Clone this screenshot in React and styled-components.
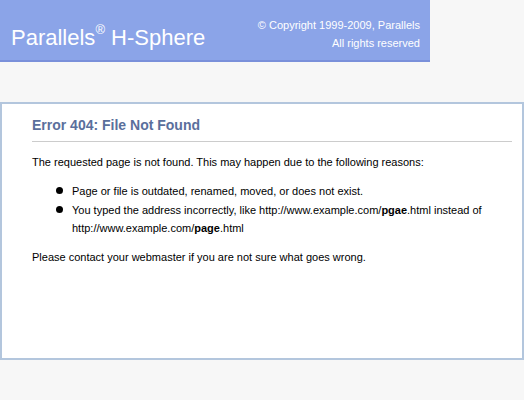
import React from 'react'
import styled, { createGlobalStyle } from 'styled-components';

const GlobalStyle = createGlobalStyle`
  html, body {
    margin: 0;
    padding: 0;
    background: #f7f7f7;
    font-family: "Liberation Sans", Arial, Helvetica, sans-serif;
  }
`;

const App = () => {
  return (
    <Page>
      <GlobalStyle />
      <Header>
        <Logo>Parallels<sup>®</sup> H-Sphere</Logo>
        <Copyright>
          <span>© Copyright 1999-2009, Parallels</span>
          <span>All rights reserved</span>
        </Copyright>
      </Header>
      <Panel>
        <Title>Error 404: File Not Found</Title>
        <Text>The requested page is not found. This may happen due to the following reasons:</Text>
        <Reasons>
          <li>Page or file is outdated, renamed, moved, or does not exist.</li>
          <li>
            You typed the address incorrectly, like http://www.example.com/<b>pgae</b>.html instead of
            http://www.example.com/<b>page</b>.html
          </li>
        </Reasons>
        <Text>Please contact your webmaster if you are not sure what goes wrong.</Text>
      </Panel>
    </Page>
  )
}

export default App;

const Page = styled.div`
  width: 524px;
  height: 400px;
  background: #f7f7f7;
`;

const Header = styled.header`
  width: 430px;
  height: 60px;
  box-sizing: content-box;
  background: #8ba4e8;
  border-bottom: 2px solid #7a90da;
  display: flex;
  justify-content: space-between;
  align-items: flex-start;
  color: #ffffff;
`;

const Logo = styled.div`
  font-size: 22px;
  margin: 25px 0 0 11px;
  line-height: 26px;

  sup {
    font-size: 13px;
    position: relative;
    top: -2px;
    vertical-align: top;
    line-height: 13px;
  }
`;

const Copyright = styled.div`
  display: flex;
  flex-direction: column;
  align-items: flex-end;
  font-size: 11px;
  line-height: 18px;
  margin: 16px 10px 0 0;
`;

const Panel = styled.main`
  margin-top: 40px;
  height: 243px;
  border: 2px solid #b3c6dd;
  background: #ffffff;
  padding: 11px 10px 0 30px;
`;

const Title = styled.h1`
  margin: 0;
  font-size: 14px;
  font-weight: bold;
  color: #5a6f9c;
  line-height: 20px;
  padding-bottom: 6px;
  border-bottom: 1px solid #cccccc;
`;

const Text = styled.p`
  margin: 11px 0 0;
  font-size: 11px;
  line-height: 18px;
  color: #000000;
`;

const Reasons = styled.ul`
  margin: 11px 0 0;
  padding-left: 40px;
  font-size: 11px;
  line-height: 18px;
  list-style: none;

  li {
    position: relative;
  }

  li + li {
    margin-top: 1px;
  }

  li::before {
    content: '';
    position: absolute;
    left: -16px;
    top: 5px;
    width: 7px;
    height: 7px;
    border-radius: 50%;
    background: #000;
  }
`;
